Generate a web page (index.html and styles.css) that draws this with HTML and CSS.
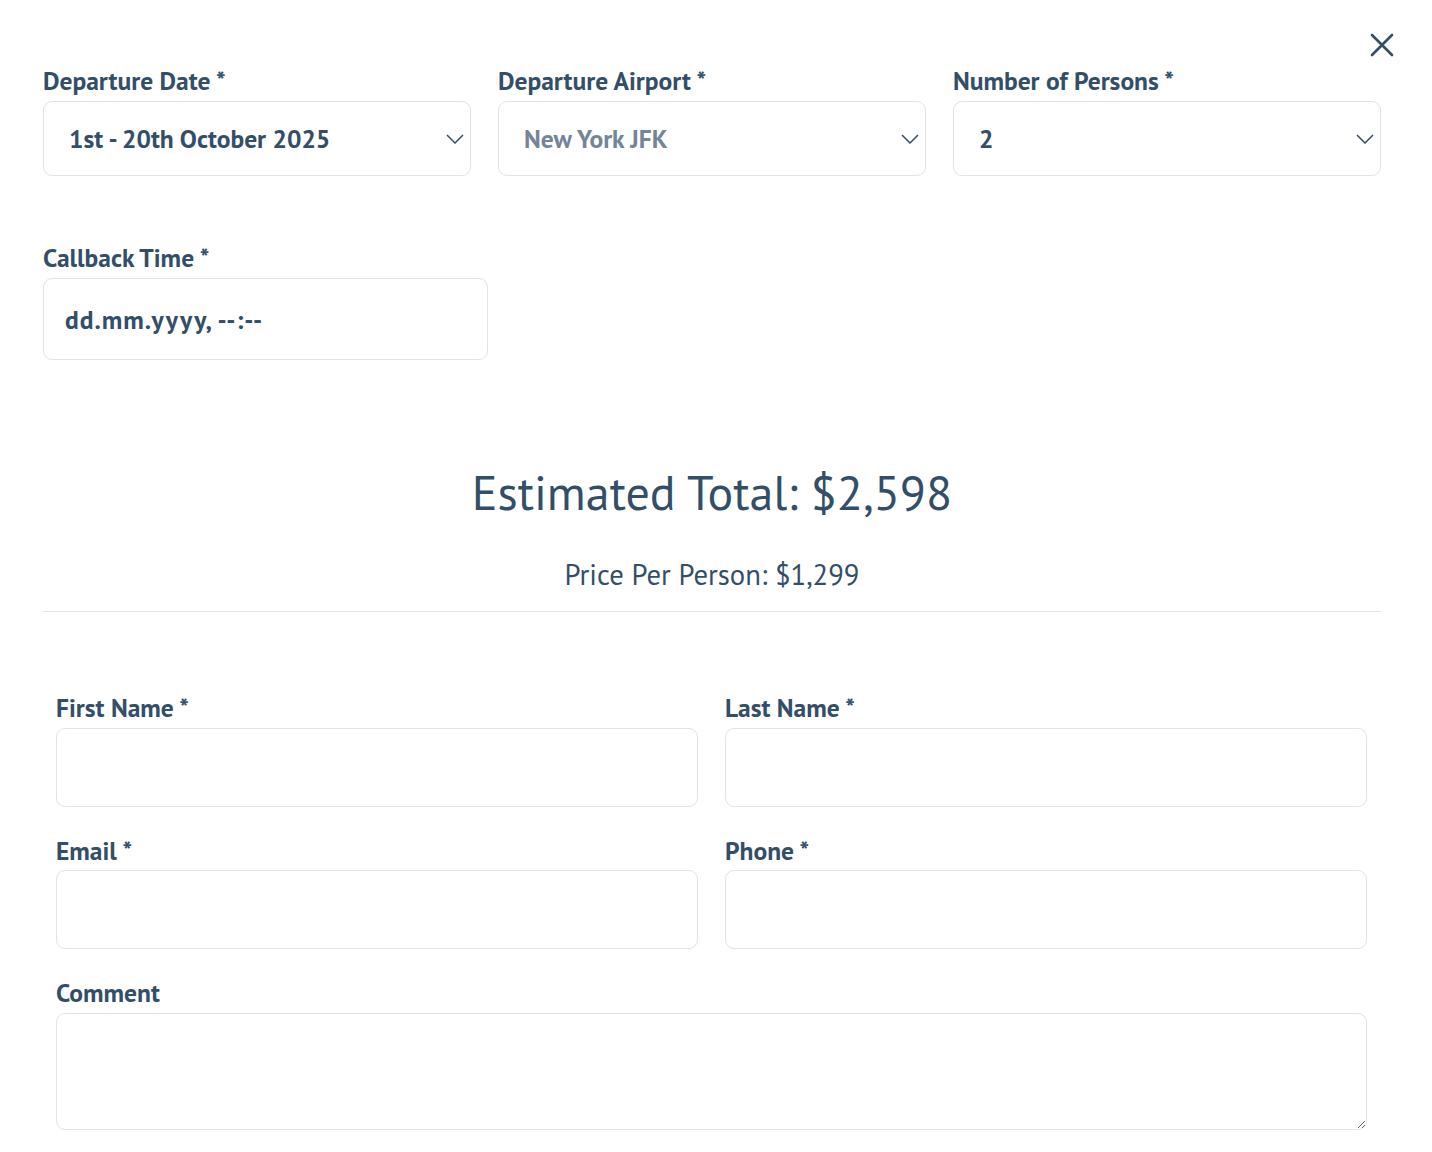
FILE: index.html
```html
<!DOCTYPE html>
<html lang="en">
<head>
<meta charset="utf-8">
<title>Booking request</title>
<link rel="stylesheet" href="styles.css">
</head>
<body>
<div class="modal">
  <button class="close" type="button" aria-label="Close">
    <svg viewBox="0 0 24 24" width="24" height="24"><path d="M2 2 L22 22 M22 2 L2 22" /></svg>
  </button>

  <div class="trip">
    <div class="field">
      <label class="label">Departure Date *</label>
      <div class="select-wrap">
        <select class="control select"><option>1st - 20th October 2025</option></select>
        <svg class="chev" viewBox="0 0 18 10" width="18" height="10"><polyline points="1,1 9,9 17,1" /></svg>
      </div>
    </div>
    <div class="field">
      <label class="label">Departure Airport *</label>
      <div class="select-wrap">
        <select class="control select muted"><option>New York JFK</option></select>
        <svg class="chev" viewBox="0 0 18 10" width="18" height="10"><polyline points="1,1 9,9 17,1" /></svg>
      </div>
    </div>
    <div class="field">
      <label class="label">Number of Persons *</label>
      <div class="select-wrap">
        <select class="control select"><option>2</option></select>
        <svg class="chev" viewBox="0 0 18 10" width="18" height="10"><polyline points="1,1 9,9 17,1" /></svg>
      </div>
    </div>
  </div>

  <div class="callback field">
    <label class="label">Callback Time *</label>
    <input class="control datetime" type="text" placeholder="dd.mm.yyyy, --:--">
  </div>

  <div class="summary">
    <h2 class="total">Estimated Total: $2,598</h2>
    <p class="per">Price Per Person: $1,299</p>
  </div>

  <hr class="divider">

  <form class="contact">
    <div class="field">
      <label class="label">First Name *</label>
      <input class="control text" type="text">
    </div>
    <div class="field">
      <label class="label">Last Name *</label>
      <input class="control text" type="text">
    </div>
    <div class="field">
      <label class="label">Email *</label>
      <input class="control text" type="email">
    </div>
    <div class="field">
      <label class="label">Phone *</label>
      <input class="control text" type="tel">
    </div>
    <div class="field wide">
      <label class="label">Comment</label>
      <textarea class="control area"></textarea>
    </div>
  </form>
</div>
</body>
</html>
```
FILE: styles.css
```css
* { box-sizing: border-box; }

html, body {
  margin: 0;
  background: #ffffff;
}

body {
  font-family: "PT Sans", "Lato", "Liberation Sans", sans-serif;
  color: #334e68;
}

.modal {
  position: relative;
  width: 1338px;
  margin-left: 43px;
  padding-top: 65px;
}

.close {
  position: absolute;
  top: 33px;
  left: 1327px;
  width: 24px;
  height: 24px;
  padding: 0;
  border: 0;
  background: none;
  cursor: pointer;
}

.close svg {
  display: block;
  fill: none;
  stroke: #334e68;
  stroke-width: 2.6;
  stroke-linecap: round;
}

.field {
  display: flex;
  flex-direction: column;
}

.label {
  display: block;
  font-size: 25.5px;
  font-weight: 700;
  line-height: 32px;
  margin-bottom: 4px;
}

.trip {
  display: grid;
  grid-template-columns: repeat(3, 1fr);
  column-gap: 27px;
}

.control {
  font-family: inherit;
  color: #334e68;
  background: #ffffff;
  border: 1px solid #e3e3e6;
  border-radius: 9px;
  outline: none;
}

.select-wrap {
  position: relative;
}

.select {
  appearance: none;
  -webkit-appearance: none;
  width: 100%;
  height: 75px;
  padding: 0 40px 0 25px;
  font-size: 25.5px;
  font-weight: 700;
}

.select.muted {
  color: #748599;
}

.chev {
  position: absolute;
  right: 7px;
  top: 33px;
  fill: none;
  stroke: #334e68;
  stroke-width: 1.5;
  pointer-events: none;
}

.callback {
  width: 445px;
  margin-top: 66px;
}

.datetime {
  height: 82px;
  padding: 0 21px;
  font-size: 25.5px;
  font-weight: 700;
  letter-spacing: 1px;
}

.datetime::placeholder {
  color: #334e68;
  opacity: 1;
}

.summary {
  text-align: center;
  margin-top: 102px;
}

.total {
  margin: 0;
  font-size: 48px;
  font-weight: 400;
  line-height: 60px;
}

.per {
  margin: 35px 0 0;
  font-size: 28.7px;
  font-weight: 400;
  line-height: 36px;
}

.divider {
  margin: 18px 0 0;
  border: 0;
  border-top: 1px solid #e5e5e5;
}

.contact {
  display: grid;
  grid-template-columns: 1fr 1fr;
  column-gap: 27px;
  row-gap: 28px;
  padding: 0 14px 40px 13px;
  margin-top: 80px;
}

.contact .label {
  margin-bottom: 3.5px;
}

.text {
  height: 79px;
  width: 100%;
  padding: 0 20px;
  font-size: 25.5px;
}

.wide {
  grid-column: 1 / -1;
}

.area {
  height: 117px;
  width: 100%;
  padding: 14px 20px;
  font-size: 25.5px;
  resize: vertical;
}
```
